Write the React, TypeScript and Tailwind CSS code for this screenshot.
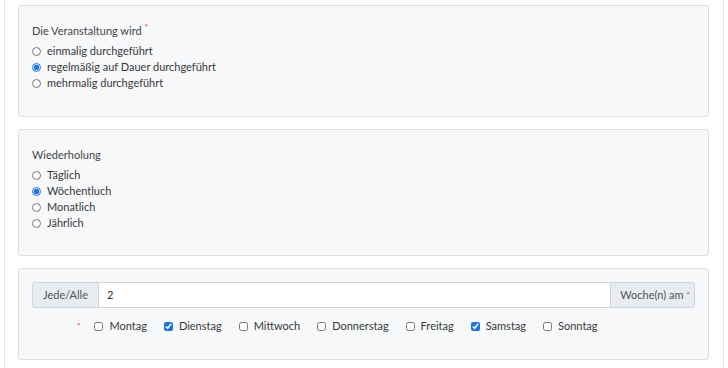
import { useState } from 'react'

const FONT = "font-['Lato','Liberation_Sans',sans-serif]"

type RadioGroupProps = {
  label: string
  required?: boolean
  options: string[]
  value: number
  onChange: (i: number) => void
}

function Req() {
  return <span className="ml-[3px] align-top text-[8px] leading-none text-[#e3342f]">*</span>
}

function RadioGroup({ label, required, options, value, onChange }: RadioGroupProps) {
  return (
    <div className="flex flex-col">
      <div className="h-4 text-[11px] leading-4 text-[#454545]">
        {label}
        {required && <Req />}
      </div>
      <div className="mt-1 flex flex-col">
        {options.map((opt, i) => (
          <label key={opt} className="flex h-4 items-center gap-[6px] text-[11px] text-[#383838]">
            <input
              type="radio"
              checked={value === i}
              onChange={() => onChange(i)}
              className="m-0 h-[9px] w-[9px] accent-[#1a73e8]"
            />
            {opt}
          </label>
        ))}
      </div>
    </div>
  )
}

const DAYS = ['Montag', 'Dienstag', 'Mittwoch', 'Donnerstag', 'Freitag', 'Samstag', 'Sonntag']

export default function App() {
  const [mode, setMode] = useState(1)
  const [repeat, setRepeat] = useState(1)
  const [every, setEvery] = useState('2')
  const [days, setDays] = useState<boolean[]>([false, true, false, false, false, true, false])

  return (
    <div className={`${FONT} h-[368px] w-[728px] bg-white`}>
      <div className="ml-[4px] mr-[4px] flex h-full flex-col gap-3 border-x border-[#e6e6e6] pl-[13px] pr-[14px] pt-[5px]">
        <div className="rounded-[3px] border border-[#dcdee0] bg-[#f7f8fa] px-[13px] pb-[25px] pt-[17px]">
          <RadioGroup
            label="Die Veranstaltung wird"
            required
            options={['einmalig durchgeführt', 'regelmäßig auf Dauer durchgeführt', 'mehrmalig durchgeführt']}
            value={mode}
            onChange={setMode}
          />
        </div>

        <div className="rounded-[3px] border border-[#dcdee0] bg-[#f7f8fa] px-[13px] pb-[24px] pt-[17px]">
          <RadioGroup
            label="Wiederholung"
            options={['Täglich', 'Wöchentluch', 'Monatlich', 'Jährlich']}
            value={repeat}
            onChange={setRepeat}
          />
        </div>

        <div className="rounded-[3px] border border-[#dcdee0] bg-[#f7f8fa] px-[13px] pb-[25px] pt-[13px]">
          <div className="flex h-[26px] text-[11px]">
            <span className="flex items-center rounded-l-[3px] border border-[#ced4da] bg-[#e9ecef] px-[10px] text-[#50555b]">
              Jede/Alle
            </span>
            <input
              value={every}
              onChange={(e) => setEvery(e.target.value)}
              className="min-w-0 flex-1 border-y border-[#ced4da] bg-white px-[8px] text-[11px] text-[#333] outline-none"
            />
            <span className="flex items-center rounded-r-[3px] border border-[#ced4da] bg-[#e9ecef] pl-[9px] pr-[4px] text-[#50555b]">
              Woche(n) am
              <Req />
            </span>
          </div>

          <div className="mt-[10px] flex h-4 items-center pl-[45px] text-[11px] text-[#383838]">
            <span className="mr-[14px] text-[8px] leading-none text-[#e3342f]">*</span>
            <div className="flex items-center gap-[17px]">
              {DAYS.map((d, i) => (
                <label key={d} className="flex items-center gap-[6px]">
                  <input
                    type="checkbox"
                    checked={days[i]}
                    onChange={() => setDays(days.map((v, j) => (j === i ? !v : v)))}
                    className="m-0 h-[9px] w-[9px] accent-[#1a73e8]"
                  />
                  {d}
                </label>
              ))}
            </div>
          </div>
        </div>
      </div>
    </div>
  )
}
